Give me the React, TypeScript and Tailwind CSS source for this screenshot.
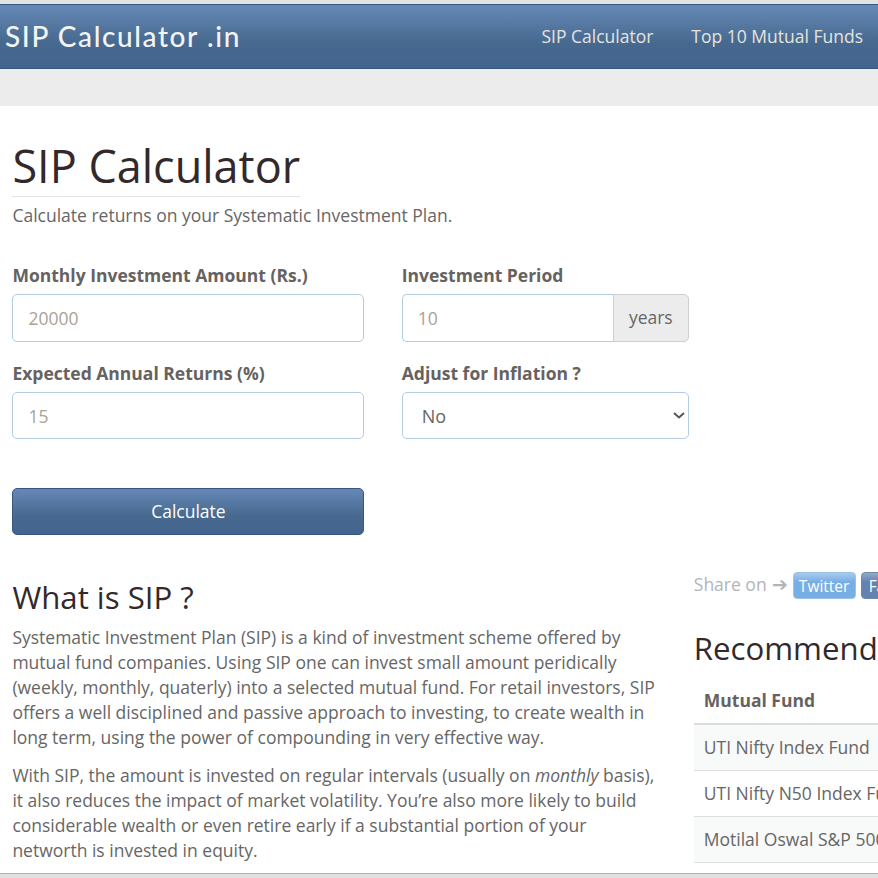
const font = "[font-family:'Open_Sans',sans-serif]";
const labelCls = "mb-[6px] h-[25px] text-[17.5px] leading-[25px] font-bold text-[#666260]";

function Field({ label, value, heightClass }: { label: string; value: string; heightClass: string }) {
  return (
    <div className="flex flex-col">
      <label className={labelCls}>{label}</label>
      <input
        readOnly
        value={value}
        className={`${heightClass} w-full rounded-[5px] border border-[#b3cbe3] bg-white px-[15px] text-[17.5px] text-[#a8a298] outline-none`}
      />
    </div>
  );
}

export default function App() {
  return (
    <div className={`${font} flex h-[878px] w-[878px] flex-col overflow-hidden bg-white text-[#666]`}>
      <div className="h-[4px] shrink-0 bg-[#e3e3e3]" />
      <header className="flex h-[65px] shrink-0 items-center justify-between border-y border-[#36587f] bg-gradient-to-b from-[#6588b6] via-[#47698f] via-60% to-[#426490] pr-[15px] pl-[5px]">
        <div className="mb-[2px] [font-family:'Lato',sans-serif] text-[28px] leading-none font-medium tracking-[1.6px] text-[#f3f4f4]">SIP Calculator .in</div>
        <nav className="flex gap-[38px] text-[17.5px] text-[#e4e4df]">
          <span>SIP Calculator</span>
          <span>Top 10 Mutual Funds</span>
        </nav>
      </header>
      <div className="h-[37px] shrink-0 bg-[#ececec]" />

      <main className="flex-1 overflow-hidden px-[12.4px]">
        <h1 className="mt-[31px] inline-block border-b border-[#e4e4e4] pb-[1px] text-[45px] leading-[58px] font-normal text-[#33292b]">SIP Calculator</h1>
        <p className="mt-[6px] text-[17.5px] leading-[25px]">Calculate returns on your Systematic Investment Plan.</p>

        <form className="mt-[35px] grid w-[677px] grid-cols-[352px_287px] gap-x-[37.4px] gap-y-[19px]">
          <Field label="Monthly Investment Amount (Rs.)" value="20000" heightClass="h-[48px]" />
          <div className="flex flex-col">
            <label className={labelCls}>Investment Period</label>
            <div className="flex h-[48px]">
              <input
                readOnly
                value="10"
                className="h-full w-[211px] rounded-l-[5px] border border-r-0 border-[#b3cbe3] bg-white px-[15px] text-[17.5px] text-[#a8a298] outline-none"
              />
              <span className="flex flex-1 items-center justify-center rounded-r-[5px] border border-[#cfcfcf] bg-[#ececec] pb-[2px] text-[17.5px]">years</span>
            </div>
          </div>
          <Field label="Expected Annual Returns (%)" value="15" heightClass="h-[47px]" />
          <div className="flex flex-col">
            <label className={labelCls}>Adjust for Inflation ?</label>
            <div className="relative h-[47px]">
              <select defaultValue="No" className="h-full w-full appearance-none rounded-[5px] border border-[#b3cbe3] bg-white pt-[1px] pl-[19px] text-[18px] text-[#666] outline-none">
                <option>No</option>
                <option>Yes</option>
              </select>
              <svg className="absolute top-[20px] right-[4px]" width="12" height="7" viewBox="0 0 12 7" fill="none">
                <path d="M1 1l5 4.5L11 1" stroke="#555" strokeWidth="2" />
              </svg>
            </div>
          </div>
        </form>

        <button className="mt-[49px] block h-[47px] w-[352px] rounded-[5px] border border-[#36587f] bg-gradient-to-b from-[#6588b6] via-[#47698f] via-60% to-[#426490] text-[17.5px] text-white">Calculate</button>

        <div className="mt-[37px] flex w-[1100px] gap-[37.4px]">
          <section className="w-[644px] shrink-0">
            <h2 className="h-[50px] text-[31.2px] leading-[50px] font-normal text-[#33292b]">What is SIP ?</h2>
            <p className="mt-[3px] text-[17.5px] leading-[25px]">Systematic Investment Plan (SIP) is a kind of investment scheme offered by mutual fund companies. Using SIP one can invest small amount peridically (weekly, monthly, quaterly) into a selected mutual fund. For retail investors, SIP offers a well disciplined and passive approach to investing, to create wealth in long term, using the power of compounding in very effective way.</p>
            <p className="mt-[13px] text-[17.5px] leading-[25px]">With SIP, the amount is invested on regular intervals (usually on <em>monthly</em> basis), it also reduces the impact of market volatility. You’re also more likely to build considerable wealth or even retire early if a substantial portion of your networth is invested in equity.</p>
          </section>
          <aside className="w-[400px] shrink-0">
            <div className="flex h-[27px] items-center text-[17.5px] text-[#b0b5ba]">
              <span className="pb-[2px]">Share on</span>
              <span className="ml-[5px] pb-[2px] text-[19px] leading-none">➔</span>
              <span className="ml-[5px] flex h-[27px] w-[63px] items-center justify-center rounded-[4px] border border-[#9cc2ea] bg-gradient-to-b from-[#a9caec] to-[#78aee6] to-35% pt-[2px] text-[15.5px] text-white">Twitter</span>
              <span className="ml-[5px] flex h-[27px] w-[90px] items-center rounded-[4px] border border-[#6e88ad] bg-gradient-to-b from-[#95abc9] to-[#6483ae] to-35% pt-[2px] pl-[7px] text-[15.5px] text-white">Facebook</span>
            </div>
            <h2 className="mt-[24px] h-[50px] text-[31.2px] leading-[50px] font-normal whitespace-nowrap text-[#33292b]">Recommended Funds</h2>
            <table className="mt-[3px] w-full border-collapse text-left text-[17.5px]">
              <thead>
                <tr className="h-[48px] border-b-2 border-[#dcdcdc]"><th className="pt-[1px] pl-[10px] font-bold text-[#666260]">Mutual Fund</th></tr>
              </thead>
              <tbody>
                <tr className="h-[46px] border-b border-[#dedede] bg-[#f8f9f9]"><td className="pl-[10px] whitespace-nowrap">UTI Nifty Index Fund</td></tr>
                <tr className="h-[46px] border-b border-[#dedede]"><td className="pl-[10px] whitespace-nowrap">UTI Nifty N50 Index Fund</td></tr>
                <tr className="h-[46px] border-b border-[#dedede] bg-[#f8f9f9]"><td className="pl-[10px] whitespace-nowrap">Motilal Oswal S&amp;P 500 Index Fund</td></tr>
              </tbody>
            </table>
          </aside>
        </div>
      </main>
      <div className="h-[5px] shrink-0 border-t border-[#a9b0b6] bg-[#e0e0e0]" />
    </div>
  );
}
